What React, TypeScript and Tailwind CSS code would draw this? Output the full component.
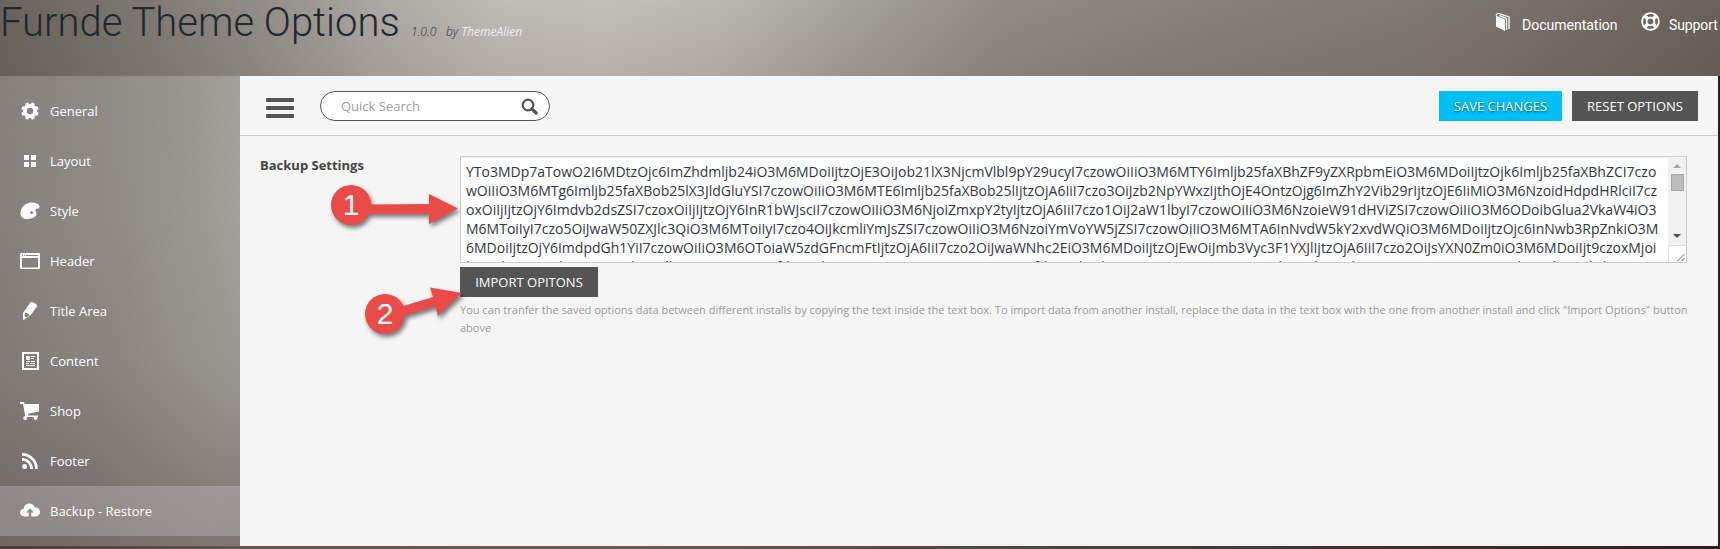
import React from "react";
import { FaRegLifeRing } from "react-icons/fa";

type IconProps = { children: React.ReactNode };

function Glyph({ children }: IconProps) {
  return (
    <svg width="20" height="20" viewBox="0 0 20 20" fill="#fff" className="shrink-0">
      {children}
    </svg>
  );
}

const GearIcon = () => (
  <Glyph>
    <g>
      {[0, 45, 90, 135, 180, 225, 270, 315].map((a) => (
        <path key={a} d="M7.9 3.6 L8.6 1.2 H11.4 L12.1 3.6 Z" transform={`rotate(${a + 22.5} 10 10)`} />
      ))}
      <circle cx="10" cy="10" r="5.1" fill="none" stroke="#fff" strokeWidth="3.8" />
    </g>
  </Glyph>
);

const GridIcon = () => (
  <Glyph>
    <path d="M4 4h5v5H4zM11 4h5v5h-5zM4 11h5v5H4zM11 11h5v5h-5z" />
  </Glyph>
);

const PaletteIcon = () => (
  <Glyph>
    <path
      fillRule="evenodd"
      d="M.5 13C0 8 3.5 3.2 8.8 1.9c3.500-.9 8.300-.2 10.300 2.500.8 1.100.5 2.800-.8 3.100-1.200.3-2.300.1-2.800.8-.6.9.9 2 1 4.100.1 2.400-2.300 4-4.600 4.900C7.600 18.900 1 18.300.5 13zM10.200 11.700a1.400 1.400 0 1 0 2.800 0 1.400 1.400 0 0 0-2.800 0z"
    />
  </Glyph>
);

const WindowIcon = () => (
  <Glyph>
    <path
      fillRule="evenodd"
      d="M1 2h18a1 1 0 0 1 1 1v14a1 1 0 0 1-1 1H1a1 1 0 0 1-1-1V3a1 1 0 0 1 1-1zM2 7v9.500h16V7zM2 4v1h1V4zM4 4v1h1V4zM6 4v1h12V4z"
    />
  </Glyph>
);

const PencilIcon = () => (
  <Glyph>
    <path
      fillRule="evenodd"
      d="M9.800 2.300C10.300 1.200 11.500.8 12.600 1.200l3 1.500c1.200.7 1.700 1.900 1.100 3L10.800 14 3.200 19.200 3 12zM5.200 11.700l-.6 3.400 1.800 1.100 2.900-1.700c.1-1.400-2.300-3.200-4.100-2.800z"
    />
  </Glyph>
);

const ArticleIcon = () => (
  <Glyph>
    <path fillRule="evenodd" d="M2 1h17v18h-17zM4 3v14h13V3z" />
    <path d="M6 5h4v4H6zM11 5h4v1h-4zM11 7h3v1h-3zM6 10h4v1H6zM11 10h4v1h-4zM6 12h3v1H6zM10 12h5v1h-5zM6 14h9v1H6z" />
  </Glyph>
);

const CartIcon = () => (
  <Glyph>
    <path d="M0 1h4l.8 2H19v7.500L8 12.800l.3 1.700H18V16H5.500L3 3H0z" />
    <circle cx="5.200" cy="17" r="2" />
    <circle cx="15.500" cy="17" r="2" />
  </Glyph>
);

const FeedIcon = () => (
  <Glyph>
    <circle cx="4.600" cy="15.600" r="2.500" />
    <path d="M2 8.400A9.500 9.500 0 0 1 11.500 18M2 3.400A14.500 14.500 0 0 1 16.500 18" fill="none" stroke="#fff" strokeWidth="2.800" />
  </Glyph>
);

const CloudIcon = () => (
  <Glyph>
    <path
      fillRule="evenodd"
      d="M4.500 15.500C2 15.500 0 13.900 0 11.600c0-2 1.400-3.500 3.700-3.900C3.900 4.800 6.200 2.400 9.300 2.400c2.700 0 4.600 1.400 5.400 3.800C17.800 6.200 20 8.300 20 11c0 2.700-2 4.500-4.600 4.500H11.300V11.400h2.500L10 7.200 6.200 11.400h2.500v4.100z"
    />
  </Glyph>
);

const items: { label: string; icon: () => React.ReactElement; active?: boolean }[] = [
  { label: "General", icon: GearIcon },
  { label: "Layout", icon: GridIcon },
  { label: "Style", icon: PaletteIcon },
  { label: "Header", icon: WindowIcon },
  { label: "Title Area", icon: PencilIcon },
  { label: "Content", icon: ArticleIcon },
  { label: "Shop", icon: CartIcon },
  { label: "Footer", icon: FeedIcon },
  { label: "Backup - Restore", icon: CloudIcon, active: true },
];

const backupLines = [
  "YTo3MDp7aTowO2I6MDtzOjc6ImZhdmljb24iO3M6MDoiIjtzOjE3OiJob21lX3NjcmVlbl9pY29ucyI7czowOiIiO3M6MTY6Imljb25faXBhZF9yZXRpbmEiO3M6MDoiIjtzOjk6Imljb25faXBhZCI7czo",
  "wOiIiO3M6MTg6Imljb25faXBob25lX3JldGluYSI7czowOiIiO3M6MTE6Imljb25faXBob25lIjtzOjA6IiI7czo3OiJzb2NpYWxzIjthOjE4OntzOjg6ImZhY2Vib29rIjtzOjE6IiMiO3M6NzoidHdpdHRlciI7cz",
  "oxOiIjIjtzOjY6Imdvb2dsZSI7czoxOiIjIjtzOjY6InR1bWJsciI7czowOiIiO3M6NjoiZmxpY2tyIjtzOjA6IiI7czo1OiJ2aW1lbyI7czowOiIiO3M6NzoieW91dHViZSI7czowOiIiO3M6ODoibGlua2VkaW4iO3",
  "M6MToiIyI7czo5OiJwaW50ZXJlc3QiO3M6MToiIyI7czo4OiJkcmliYmJsZSI7czowOiIiO3M6NzoiYmVoYW5jZSI7czowOiIiO3M6MTA6InNvdW5kY2xvdWQiO3M6MDoiIjtzOjc6InNwb3RpZnkiO3M",
  "6MDoiIjtzOjY6ImdpdGh1YiI7czowOiIiO3M6OToiaW5zdGFncmFtIjtzOjA6IiI7czo2OiJwaWNhc2EiO3M6MDoiIjtzOjEwOiJmb3Vyc3F1YXJlIjtzOjA6IiI7czo2OiJsYXN0Zm0iO3M6MDoiIjt9czoxMjoi",
  "bG9nb190eXBlIjtzOjU6ImltYWdlIjtzOjg6ImxvZ29fdGV4dCI7czowOiIiO3M6MTQ6ImxvZ29fdGV4dF9jb2xvciI7czowOiIiO3M6OToibG9nb19mb250IjtzOjA6IiI7czoxMDoibG9nb19zdHlsZSI7",
];

function Callouts() {
  return (
    <svg width="180" height="170" viewBox="0 0 180 170" className="pointer-events-none absolute left-[320px] top-[176px] overflow-visible">
      <g className="drop-shadow-[2px_3px_2px_rgba(0,0,0,0.5)]" fill="#e94b48">
        <circle cx="31" cy="29" r="20" />
        <path d="M45 28.500 L109 28 L109 18 L138 32.500 L109 48 L109 38 L45 38 Z" />
      </g>
      <g className="drop-shadow-[2px_3px_2px_rgba(0,0,0,0.5)]" fill="#e94b48">
        <circle cx="65" cy="138" r="20" />
        <path d="M80 131 L113 121 L110 111.500 L142 117 L118 140 L115.500 130.500 L84 140 Z" />
      </g>
      <g fill="#fff" className="font-['Liberation_Sans'] text-[30px]" textAnchor="middle">
        <text x="31" y="39">1</text>
        <text x="65" y="148">2</text>
      </g>
    </svg>
  );
}

export default function App() {
  return (
    <div className="relative flex h-[549px] w-[1720px] flex-col overflow-hidden bg-[linear-gradient(90deg,#4a3e3b_0%,#625550_14%,#6b5e58_35%,#4b3e3b_65%,#2b1f22_100%)] font-['Open_Sans',sans-serif]">
      <header className="flex h-[76px] shrink-0 items-start justify-between bg-[linear-gradient(180deg,rgba(60,45,40,0)_0%,rgba(60,45,40,0.1)_100%),linear-gradient(97deg,#69635e_0%,#7b7570_7%,#928d88_15%,#aca8a3_22%,#bfbbb7_29%,#c3bfbb_35%,#bab6b1_42%,#a39f99_50%,#8f8b84_58%,#86817b_70%,#807973_82%,#6a605a_100%)]">
        <h1 className="flex items-baseline whitespace-nowrap font-[Roboto] text-[40px] font-light leading-[46px] text-[#23282d]">
          <span className="w-[411px]">Furnde Theme Options</span>
          <span className="w-[35px] font-['Open_Sans'] text-[12px] font-light italic leading-none text-[#333]">1.0.0</span>
          <span className="font-['Open_Sans'] text-[12px] font-light italic leading-none text-[#333]">
            by <span className="font-normal text-[#eee]">ThemeAlien</span>
          </span>
        </h1>
        <nav className="flex pt-[12px] font-[Roboto] text-[14px] leading-[26px] text-white">
          <a className="flex w-[146px] items-start">
            <svg width="16" height="20" viewBox="0 0 16 20" className="mr-[11px]">
              <path d="M1 3.500 L10 7.500 V19 L1 14.500 Z" fill="#fff" />
              <path d="M1 3.500 C1.500 1.500 3.500 1 5 1.800 L14 5 V17 M4.500 3.600 L11.500 6.500 V18" fill="none" stroke="#fff" strokeWidth="1.300" />
            </svg>
            <span>Documentation</span>
          </a>
          <a className="flex w-[79px] items-start">
            <FaRegLifeRing size={19} className="mr-[9px]" />
            <span className="tracking-[-0.100px]">Support</span>
          </a>
        </nav>
      </header>

      <div className="flex h-[470px] w-[1718px]">
        <aside className="w-[240px] shrink-0 bg-[linear-gradient(180deg,rgba(95,80,78,0)_0%,rgba(90,76,74,0.05)_30%,rgba(88,74,74,0.18)_60%,rgba(85,72,72,0.52)_100%),linear-gradient(100deg,#85807c_0%,#95918d_50%,#aaa9a3_90%,#a9a5a1_100%)] pt-[10px]">
          {items.map(({ label, icon: Icon, active }) => (
            <a
              key={label}
              className={
                active
                  ? "flex h-[50px] items-center bg-white/20 pl-[20px] text-[13px] text-white"
                  : "flex h-[50px] items-center pl-[20px] text-[13px] text-white"
              }
            >
              <Icon />
              <span className="ml-[10px] pt-px">{label}</span>
            </a>
          ))}
        </aside>

        <main className="min-w-0 flex-1 bg-[#f5f5f5]">
          <div className="flex h-[60px] items-start border-b border-[#ccc] pt-[15px]">
            <div className="ml-[26px] mt-[7px] flex w-[28px] flex-col gap-[4px]">
              <i className="h-[4px] rounded-[1px] bg-[#555]" />
              <i className="h-[4px] rounded-[1px] bg-[#555]" />
              <i className="h-[4px] rounded-[1px] bg-[#555]" />
            </div>
            <div className="ml-[26px] flex h-[30px] w-[230px] items-center justify-between rounded-full border border-[#555] bg-white pl-[20px] pr-[11px] text-[13px] text-[#a0a0a0]">
              <span className="pt-px">Quick Search</span>
              <svg width="17" height="17" viewBox="0 0 17 17" fill="none" stroke="#555" className="mt-px">
                <circle cx="7" cy="7" r="5.300" strokeWidth="2.200" />
                <path d="M10.800 10.800 L15.200 15" strokeWidth="3.200" strokeLinecap="round" />
              </svg>
            </div>
            <button className="ml-auto h-[30px] w-[123px] bg-[#00bff6] pt-px text-[13px] text-white [text-shadow:0_1px_2px_rgba(0,0,0,0.6)]">SAVE CHANGES</button>
            <button className="ml-[10px] mr-[20px] h-[30px] w-[126px] bg-[#555] pt-px text-[13px] text-white">RESET OPTIONS</button>
          </div>

          <div className="flex pt-[20px]">
            <h2 className="ml-[20px] w-[200px] shrink-0 text-[13px] font-bold leading-[19px] text-[#444]">Backup Settings</h2>
            <div>
              <div className="flex h-[107px] w-[1227px] border border-[#ccc] bg-white shadow-[inset_0_1px_2px_rgba(0,0,0,0.07)]">
                <div className="w-[1207px] overflow-hidden whitespace-nowrap pl-[5px] pt-[5px] text-[14px] leading-[19px] text-[#32373c]">
                  {backupLines.map((line) => (
                    <div key={line}>{line}</div>
                  ))}
                </div>
                <div className="flex w-[18px] flex-col">
                  <div className="flex h-[88px] flex-col items-center bg-[#f1f1f1]">
                    <svg width="8" height="4" viewBox="0 0 8 4" className="mt-[7px]">
                      <path d="M0 4 L4 0 L8 4 Z" fill="#a3a3a3" />
                    </svg>
                    <i className="mt-[6px] h-[17px] w-[13px] border border-[#a8a8a8] bg-[#bcbcbc]" />
                    <svg width="8" height="4" viewBox="0 0 8 4" className="mt-[43px]">
                      <path d="M0 0 L4 4 L8 0 Z" fill="#505050" />
                    </svg>
                  </div>
                  <div className="flex flex-1 items-end justify-end border-l border-t border-[#dcdcdc] bg-white">
                    <svg width="9" height="9" viewBox="0 0 9 9" stroke="#555" strokeWidth="0.900">
                      <path d="M0.500 8 L7.500 1 M4.500 8 L7.500 5" />
                    </svg>
                  </div>
                </div>
              </div>
              <button className="mt-[4px] block h-[30px] w-[138px] bg-[#555] pt-px text-[13px] text-white">IMPORT OPITONS</button>
              <p className="mt-[4px] w-[1238px] text-[11px] leading-[18px] text-[#999]">
                <span className="whitespace-nowrap">
                  You can tranfer the saved options data between different installs by copying the text inside the text box. To import data from another install, replace the data in the text box with the one from another install and click "Import Options" button
                </span>
                <br />
                above
              </p>
            </div>
          </div>
        </main>
      </div>
      <Callouts />
    </div>
  );
}
